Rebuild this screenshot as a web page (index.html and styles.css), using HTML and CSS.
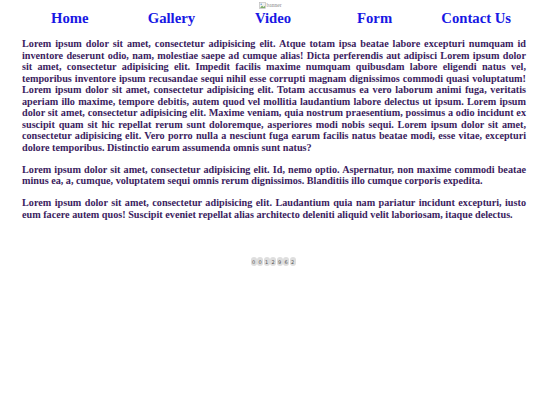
FILE: index.html
```html
<!DOCTYPE html>
<html>
<head>
<meta charset="utf-8">
<link rel="stylesheet" href="styles.css">
</head>
<body>
<header class="top">
  <div class="banner">
    <svg class="broken" width="7" height="7" viewBox="0 0 7 7"><rect x="0.5" y="0.5" width="6" height="6" fill="#f2f2f2" stroke="#b5b5b5" stroke-width="0.6"/><path d="M1 6 L3 3.5 L4.5 5 L6 3.8 L6 6 Z" fill="#7fae6a"/><circle cx="2.2" cy="2.2" r="0.8" fill="#6f9fd8"/></svg><span class="alt">banner</span>
  </div>
  <nav class="nav">
    <a class="nav-link" href="#">Home</a>
    <a class="nav-link" href="#">Gallery</a>
    <a class="nav-link" href="#">Video</a>
    <a class="nav-link" href="#">Form</a>
    <a class="nav-link" href="#">Contact Us</a>
  </nav>
</header>
<main class="content">
  <p>Lorem ipsum dolor sit amet, consectetur adipisicing elit. Atque totam ipsa beatae labore excepturi numquam id inventore deserunt odio, nam, molestiae saepe ad cumque alias! Dicta perferendis aut adipisci Lorem ipsum dolor sit amet, consectetur adipisicing elit. Impedit facilis maxime numquam quibusdam labore eligendi natus vel, temporibus inventore ipsum recusandae sequi nihil esse corrupti magnam dignissimos commodi quasi voluptatum! Lorem ipsum dolor sit amet, consectetur adipisicing elit. Totam accusamus ea vero laborum animi fuga, veritatis aperiam illo maxime, tempore debitis, autem quod vel mollitia laudantium labore delectus ut ipsum. Lorem ipsum dolor sit amet, consectetur adipisicing elit. Maxime veniam, quia nostrum praesentium, possimus a odio incidunt ex suscipit quam sit hic repellat rerum sunt doloremque, asperiores modi nobis sequi. Lorem ipsum dolor sit amet, consectetur adipisicing elit. Vero porro nulla a nesciunt fuga earum facilis natus beatae modi, esse vitae, excepturi dolore temporibus. Distinctio earum assumenda omnis sunt natus?</p>
  <p>Lorem ipsum dolor sit amet, consectetur adipisicing elit. Id, nemo optio. Aspernatur, non maxime commodi beatae minus ea, a, cumque, voluptatem sequi omnis rerum dignissimos. Blanditiis illo cumque corporis expedita.</p>
  <p>Lorem ipsum dolor sit amet, consectetur adipisicing elit. Laudantium quia nam pariatur incidunt excepturi, iusto eum facere autem quos! Suscipit eveniet repellat alias architecto deleniti aliquid velit laboriosam, itaque delectus.</p>
</main>
<div class="counter">
  <span class="digit">0</span><span class="digit">0</span><span class="digit">1</span><span class="digit">2</span><span class="digit">9</span><span class="digit">6</span><span class="digit">2</span>
</div>
</body>
</html>
```
FILE: styles.css
```css
html, body {
  margin: 0;
  padding: 0;
  background: #ffffff;
}
body {
  font-family: "Liberation Serif", "Times New Roman", serif;
}
.top {
  display: flex;
  flex-direction: column;
  align-items: center;
}
.banner {
  display: flex;
  align-items: center;
  height: 9px;
  padding-top: 1px;
  line-height: 1;
}
.broken {
  display: block;
  margin-right: 1px;
}
.alt {
  font-size: 5.5px;
  color: #888;
  font-family: "Liberation Serif", serif;
}
.nav {
  align-self: stretch;
  display: grid;
  grid-template-columns: repeat(5, 1fr);
  margin: 0 13px 0 19px;
}
.nav-link {
  text-align: center;
  font-size: 14.7px;
  font-weight: bold;
  color: #1818e4;
  text-decoration: none;
  line-height: 17px;
}
.content {
  margin: 0 14px 0 22px;
  padding-top: 11px;
}
.content p {
  margin: 0 0 10.5px 0;
  font-size: 10.2px;
  line-height: 11.5px;
  font-weight: bold;
  text-align: justify;
  color: #3b1d60;
}
.counter {
  display: flex;
  justify-content: center;
  gap: 0.5px;
  margin-top: 37px;
  margin-left: 6px;
}
.digit {
  display: inline-flex;
  align-items: center;
  justify-content: center;
  width: 6px;
  height: 9px;
  background: #dedede;
  border-radius: 3px;
  font-family: "DejaVu Sans", sans-serif;
  font-size: 5px;
  color: #555;
}
```
